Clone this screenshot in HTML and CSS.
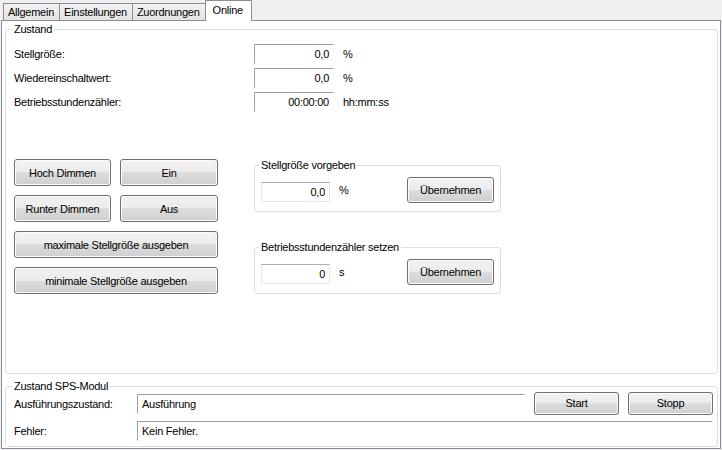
FILE: index.html
```html
<!DOCTYPE html>
<html lang="de">
<head>
    <meta charset="UTF-8">
    <title>Online</title>
    <link rel="stylesheet" href="styles.css">
</head>
<body>
    <div class="window">
        <!-- Registerkarten -->
        <div class="tabs">
            <div class="tab">Allgemein</div>
            <div class="tab">Einstellungen</div>
            <div class="tab">Zuordnungen</div>
            <div class="tab active">Online</div>
        </div>

        <div class="panel">
            <fieldset class="group group-main">
                <legend>Zustand</legend>

                <div class="values">
                    <span class="label">Stellgröße:</span>
                    <span class="display">0,0</span>
                    <span class="unit">%</span>

                    <span class="label">Wiedereinschaltwert:</span>
                    <span class="display">0,0</span>
                    <span class="unit">%</span>

                    <span class="label">Betriebsstundenzähler:</span>
                    <span class="display">00:00:00</span>
                    <span class="unit">hh:mm:ss</span>
                </div>

                <div class="controls">
                    <div class="button-grid">
                        <button class="btn">Hoch Dimmen</button>
                        <button class="btn">Ein</button>
                        <button class="btn">Runter Dimmen</button>
                        <button class="btn">Aus</button>
                        <button class="btn wide">maximale Stellgröße ausgeben</button>
                        <button class="btn wide">minimale Stellgröße ausgeben</button>
                    </div>

                    <div class="setters">
                        <fieldset class="group group-small">
                            <legend>Stellgröße vorgeben</legend>
                            <div class="set-row">
                                <input type="text" class="field" value="0,0">
                                <span class="unit">%</span>
                                <button class="btn btn-apply">Übernehmen</button>
                            </div>
                        </fieldset>

                        <fieldset class="group group-small second">
                            <legend>Betriebsstundenzähler setzen</legend>
                            <div class="set-row">
                                <input type="text" class="field" value="0">
                                <span class="unit">s</span>
                                <button class="btn btn-apply">Übernehmen</button>
                            </div>
                        </fieldset>
                    </div>
                </div>
            </fieldset>

            <fieldset class="group group-sps">
                <legend>Zustand SPS-Modul</legend>
                <div class="sps-grid">
                    <span class="label">Ausführungszustand:</span>
                    <span class="display left">Ausführung</span>
                    <button class="btn btn-small">Start</button>
                    <button class="btn btn-small">Stopp</button>

                    <span class="label">Fehler:</span>
                    <span class="display left span-all">Kein Fehler.</span>
                </div>
            </fieldset>
        </div>
    </div>
</body>
</html>
```

FILE: styles.css
```css
/* Grundlayout */
body {
    margin: 0;
    background-color: #f0f0f0;
    font-family: 'Liberation Sans', Arial, sans-serif;
    font-size: 11px;
    letter-spacing: -0.25px;
    color: #000;
}

.window {
    width: 722px;
    height: 450px;
    padding: 0 1px;
    box-sizing: border-box;
    display: flex;
    flex-direction: column;
}

/* Registerkarten */
.tabs {
    display: flex;
    align-items: flex-end;
    height: 20px;
    padding-left: 2px;
}

.tab {
    height: 17px;
    line-height: 16px;
    padding: 0 5px 0 4px;
    border: 1px solid #898c95;
    border-bottom: none;
    margin-right: -1px;
    box-sizing: border-box;
    background: linear-gradient(#f2f2f2, #e3e3e3);
}

.tab.active {
    height: 21px;
    line-height: 18px;
    padding: 0 8px 0 7px;
    margin-bottom: -1px;
    background: white;
    position: relative;
    z-index: 1;
}

.panel {
    flex: 1;
    background: white;
    border: 1px solid #898c95;
    display: flex;
    flex-direction: column;
    margin-bottom: 1px;
}

/* Gruppenrahmen */
.group {
    border: 1px solid #d5dfe5;
    border-radius: 3px;
    margin: 0;
    min-width: 0;
}

.group legend {
    padding: 0 2px;
    margin-left: -2px;
    line-height: 13px;
}

.group-main {
    flex: 1;
    margin: 2px 2px 0 3px;
    padding: 8px 8px 0 8px;
}

.values {
    display: grid;
    grid-template-columns: 231px 80px auto;
    grid-auto-rows: 20px;
    row-gap: 4px;
    column-gap: 9px;
    align-items: center;
}

.display {
    height: 20px;
    line-height: 19px;
    box-sizing: border-box;
    border: 1px solid;
    border-color: #a0a0a0 white white #a0a0a0;
    text-align: right;
    padding: 0 4px;
    white-space: nowrap;
}

.display.left {
    text-align: left;
}

/* Schaltflächen */
.controls {
    display: flex;
    gap: 36px;
    margin-top: 47px;
}

.button-grid {
    display: grid;
    grid-template-columns: 97px 98px;
    grid-auto-rows: 27px;
    gap: 9px;
    align-content: start;
}

.btn {
    font: inherit;
    letter-spacing: inherit;
    color: #000;
    border: 1px solid #707070;
    border-radius: 3px;
    box-shadow: inset 0 0 0 1px #fcfcfc;
    background: linear-gradient(#f2f2f2 0%, #ebebeb 50%, #dddddd 50%, #cfcfcf 100%);
    padding: 0;
}

.btn.wide {
    grid-column: 1 / -1;
}

.setters {
    width: 247px;
}

.group-small {
    padding: 5px 6px 8px 6px;
}

.group-small.second {
    margin-top: 29px;
}

.set-row {
    display: flex;
    align-items: center;
}

.field {
    width: 69px;
    height: 20px;
    box-sizing: border-box;
    border: 1px solid #e3e9ef;
    border-top-color: #abadb3;
    text-align: right;
    font: inherit;
    letter-spacing: inherit;
    padding: 0 4px;
    margin-top: 4px;
}

.set-row .unit {
    margin-left: 9px;
}

.btn-apply {
    width: 87px;
    height: 26px;
    margin-left: auto;
}

/* SPS-Modul */
.group-sps {
    margin: 6px 2px 1px 3px;
    padding: 1px 4px 5px 8px;
}

.sps-grid {
    display: grid;
    grid-template-columns: 114px 388px 85px 85px;
    grid-auto-rows: 20px;
    column-gap: 9px;
    row-gap: 7px;
    align-items: center;
}

.btn-small {
    height: 23px;
    margin-top: -2px;
}

.span-all {
    grid-column: 2 / -1;
}
```
